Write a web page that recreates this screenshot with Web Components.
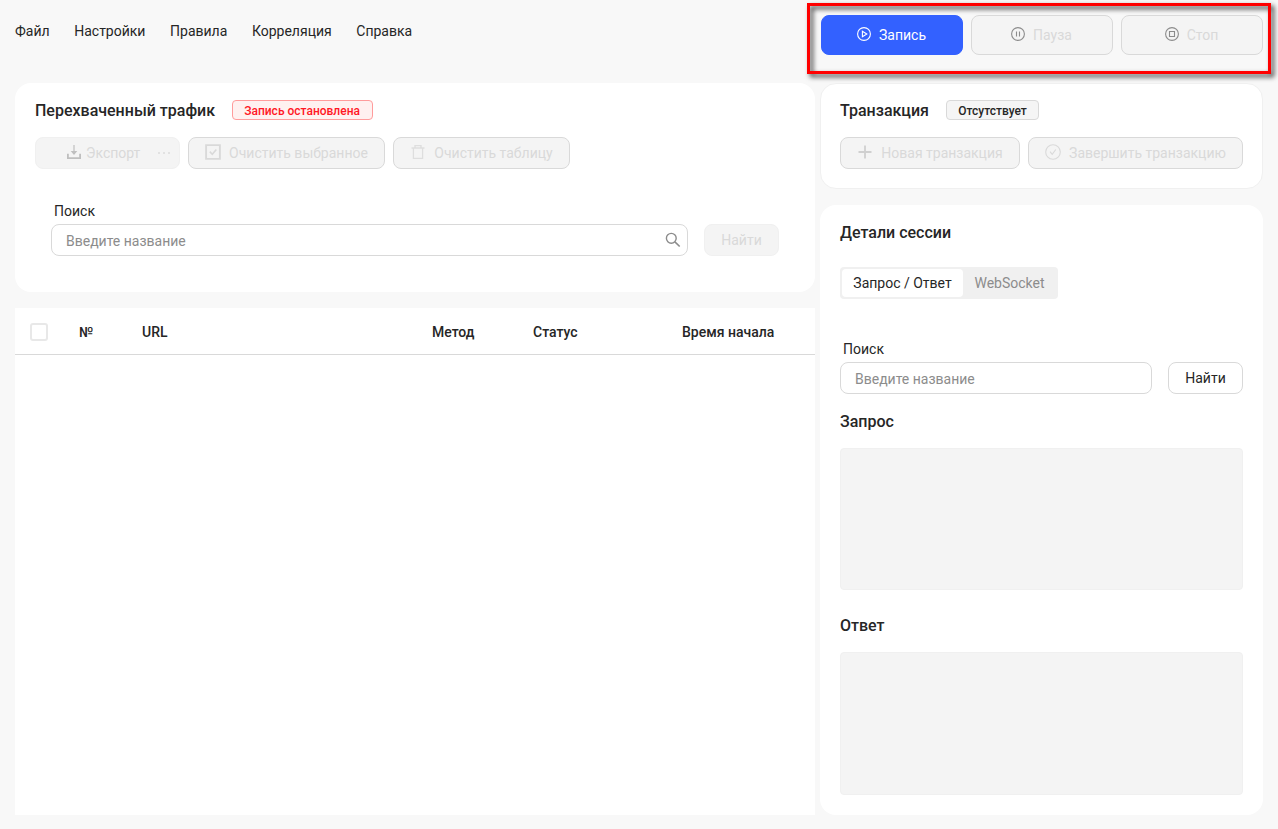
<!DOCTYPE html>
<html lang="ru">
<head>
<meta charset="utf-8">
<title>Перехваченный трафик</title>
<style>
html,body{margin:0;height:100%}
body{background:#f8f8f8;font-family:Roboto,sans-serif;font-size:14px;color:#262626;overflow:hidden}
</style>
</head>
<body>
<traffic-app></traffic-app>
<script>
const ICONS = {
  play:'<svg width="14" height="14" viewBox="0 0 14 14"><circle cx="7" cy="7" r="6.4"/><path d="M5.4 4.3v5.4L9.8 7z"/></svg>',
  pause:'<svg width="14" height="14" viewBox="0 0 14 14"><circle cx="7" cy="7" r="6.4"/><path d="M5.5 4.5v5M8.5 4.5v5"/></svg>',
  stop:'<svg width="14" height="14" viewBox="0 0 14 14"><circle cx="7" cy="7" r="6.4"/><path d="M4.5 4.5h5v5h-5z"/></svg>',
  export:'<svg width="14" height="14" viewBox="0 0 14 14"><path d="M7 0v9M5 6.6h4L7 9z" fill="currentColor" stroke-width="1.2"/><path d="M.9 8.8v4.3h12.2V8.8" stroke-width="1.8"/></svg>',
  check:'<svg width="16" height="16" viewBox="0 0 16 16"><path d="M1.1 1.1h13.8v13.8H1.1z" stroke-width="1.9"/><path d="M4.8 7.6l2.5 2.6 4-4.6" stroke-width="1.6"/></svg>',
  trash:'<svg width="16" height="16" viewBox="0 0 16 16"><path d="M1.5 4h13M5 4V1.6h6V4M3.4 4v10.4h9.2V4" stroke-width="1.3"/></svg>',
  plus:'<svg width="16" height="16" viewBox="0 0 16 16"><path d="M8 1.5v13M1.5 8h13" stroke-width="1.8"/></svg>',
  done:'<svg width="16" height="16" viewBox="0 0 16 16"><circle cx="8" cy="8" r="7.3"/><path d="M5 7.6l2.2 2.7 3.6-4.8"/></svg>',
  search:'<svg width="16" height="16" viewBox="0 0 16 16"><circle cx="6.3" cy="6.3" r="4.9" stroke-width="1.4"/><path d="M9.9 9.9l4.8 4.6" stroke-width="1.6"/></svg>',
  none:''
};
function define(name, html){
  customElements.define(name, class extends HTMLElement{
    constructor(){
      super();
      const t=document.createElement('template');
      t.innerHTML=html;
      this.attachShadow({mode:'open'}).append(t.content.cloneNode(true));
    }
    connectedCallback(){
      const slot=this.shadowRoot.querySelector('.icon');
      if(slot) slot.innerHTML=ICONS[this.getAttribute('icon')||'none'];
    }
  });
}

define('ui-button', `<style>
:host{display:flex;box-sizing:border-box;height:32px;width:var(--w);align-items:center;justify-content:center;
 border:1px solid #d9d9d9;border-radius:8px;background:#f4f4f4;color:#d9d9d9;line-height:22px;white-space:nowrap;gap:8px}
:host([size=large]){height:40px;padding-right:1px}
:host([plain]){border-color:#f0f0f0}
:host([primary]){background:#3361ff;border-color:#3361ff;color:#fff}
:host([active]){background:#fff;color:#262626}
:host([menu]){gap:5px;justify-content:flex-start;padding-left:31px}
.icon{display:flex;color:var(--icon,currentColor);margin-top:-2px}
.icon:empty{display:none}
svg{fill:none;stroke:currentColor;stroke-width:1.1}
</style><span class="icon"></span><slot></slot>`);

define('ui-tag', `<style>
:host{display:block;box-sizing:border-box;height:20px;width:var(--w);text-align:center;border:1px solid #d9d9d9;border-radius:4px;
 background:#f5f5f5;color:#262626;font-size:12px;line-height:20px;font-weight:500;white-space:nowrap}
:host([danger]){background:#fff1f0;border-color:#ff9c9c;color:#ff1825;padding-right:1px}
</style><slot></slot>`);

define('ui-card', `<style>
:host{display:flex;flex-direction:column;box-sizing:border-box;background:#fff;border-radius:16px;padding:17px 20px 0}
</style><slot></slot>`);

define('ui-title', `<style>
:host{display:flex;align-items:center;font-size:16px;font-weight:500;line-height:22px;height:20px;gap:17px;white-space:nowrap}
.text{padding-top:var(--drop,2px)}
</style><span class="text"><slot></slot></span><slot name="tag"></slot>`);

define('ui-field', `<style>
:host{display:block;flex:1}
label{display:block;line-height:22px;padding-left:3px;height:24px}
.box{display:flex;align-items:center;justify-content:space-between;box-sizing:border-box;height:32px;border:1px solid #d9d9d9;border-radius:8px;
 background:#fff;padding:2px 6px 0 14px;color:#8c8c8c;line-height:22px}
.icon{display:flex;margin-top:-2px}
svg{fill:none;stroke:#8c8c8c}
</style><label>Поиск</label><div class="box"><span>Введите название</span><span class="icon"></span></div>`);

define('app-menu', `<style>
:host{display:flex;gap:24.6px;line-height:22px;padding-top:5px}
</style><span>Файл</span><span>Настройки</span><span>Правила</span><span>Корреляция</span><span>Справка</span>`);

define('record-controls', `<style>
:host{display:flex;gap:8px;position:relative;height:40px;--w:142px}
.frame{position:absolute;left:-14px;top:-12px;width:464px;height:71px;box-sizing:border-box;border:3px solid #f00;
 filter:drop-shadow(3px 3px 2.5px rgba(0,0,0,.8));pointer-events:none}
</style>
<ui-button size="large" primary icon="play">Запись</ui-button>
<ui-button size="large" icon="pause" style="--icon:#8c8c8c">Пауза</ui-button>
<ui-button size="large" icon="stop" style="--icon:#8c8c8c">Стоп</ui-button>
<div class="frame"></div>`);

define('traffic-card', `<style>
:host{display:block}
ui-card{height:209px}
.row{display:flex;gap:8px;margin-top:17px}
.search{display:flex;align-items:flex-end;gap:16px;padding:0 16px;margin-top:31px}
.dots{margin-left:13px;display:flex;gap:3px}
.dots i{width:2px;height:2px;background:#dcdcdc;border-radius:1px}
</style>
<ui-card>
<ui-title>Перехваченный трафик<ui-tag slot="tag" danger style="--w:141px">Запись остановлена</ui-tag></ui-title>
<div class="row">
<ui-button plain menu icon="export" style="--w:145px;--icon:#bfbfbf">Экспорт<span class="dots"><i></i><i></i><i></i></span></ui-button>
<ui-button icon="check" style="--w:197px">Очистить выбранное</ui-button>
<ui-button icon="trash" style="--w:177px;--icon:#dedede">Очистить таблицу</ui-button>
</div>
<div class="search"><ui-field icon="search"></ui-field><ui-button plain style="--w:75px">Найти</ui-button></div>
</ui-card>`);

define('traffic-table', `<style>
:host{display:flex;flex-direction:column;background:#fff;flex:1}
.head{display:grid;grid-template-columns:64px 63px 290px 101px 149px 1fr;align-items:center;height:46px;border-bottom:1px solid #d9d9d9;
 font-weight:500;line-height:22px}
.head span{padding-top:2px}
.cb{box-sizing:border-box;width:18px;height:18px;border:2px solid #e8e8e8;border-radius:3px;margin:2px 0 0 15px}
</style><div class="head"><div class="cb"></div><span>№</span><span>URL</span><span>Метод</span><span>Статус</span><span>Время начала</span></div>`);

define('transaction-card', `<style>
:host{display:block}
ui-card{height:106px;border:1px solid #f0f0f0;padding:16px 19px 0}
.row{display:flex;gap:8px;margin-top:17px}
</style>
<ui-card><ui-title>Транзакция<ui-tag slot="tag" style="--w:93px">Отсутствует</ui-tag></ui-title>
<div class="row">
<ui-button icon="plus" style="--w:180px;--icon:#d0d0d0">Новая транзакция</ui-button>
<ui-button icon="done" style="--w:215px">Завершить транзакцию</ui-button>
</div></ui-card>`);

define('session-tabs', `<style>
:host{display:flex;box-sizing:border-box;width:218px;height:32px;background:#f0f0f0;border-radius:4px;padding:2px;line-height:29px}
span{box-sizing:border-box;text-align:center;white-space:nowrap}
.on{width:121px;background:#fff;border-radius:4px}
.off{width:93px;color:#8c8c8c}
</style><span class="on">Запрос / Ответ</span><span class="off">WebSocket</span>`);

define('code-panel', `<style>
:host{display:block;box-sizing:border-box;height:var(--h,142px);background:#f4f4f4;border:1px solid #f0f0f0;border-radius:4px}
</style>`);

define('session-card', `<style>
:host{display:flex;flex:1}
ui-card{flex:1}
session-tabs{margin-top:25px}
.search{display:flex;align-items:flex-end;gap:16px;margin-top:39px}
.req,.res{--drop:0px}
.req{margin-top:18px}.res{margin-top:26px}
code-panel{margin-top:16px}
</style>
<ui-card><ui-title>Детали сессии</ui-title><session-tabs></session-tabs>
<div class="search"><ui-field></ui-field><ui-button active style="--w:75px">Найти</ui-button></div>
<ui-title class="req">Запрос</ui-title><code-panel></code-panel>
<ui-title class="res">Ответ</ui-title><code-panel style="--h:143px"></code-panel></ui-card>`);

define('traffic-app', `<style>
:host{display:grid;box-sizing:border-box;width:1278px;height:829px;padding:15px 15px 14px;grid-template-columns:800px 443px;column-gap:5px;grid-template-rows:68px 1fr}
.left{display:flex;flex-direction:column;gap:16px}
.right{display:flex;flex-direction:column;gap:16px}
record-controls{margin-left:1px;z-index:1}
</style>
<app-menu></app-menu><record-controls></record-controls>
<div class="left"><traffic-card></traffic-card><traffic-table></traffic-table></div>
<div class="right"><transaction-card></transaction-card><session-card></session-card></div>`);
</script>
</body>
</html>
